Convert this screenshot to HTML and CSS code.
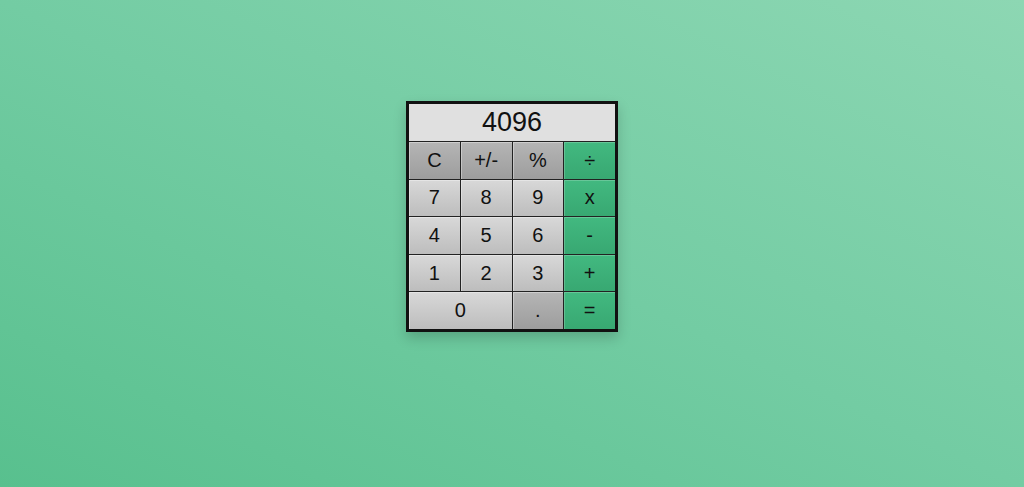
FILE: index.html
```html
<!DOCTYPE html>
<html>
<head>
<meta charset="utf-8">
<link rel="stylesheet" href="styles.css">
</head>
<body>
<div class="page">
  <div class="calc">
    <div class="display">4096</div>
    <div class="keys">
      <div class="key fn">C</div>
      <div class="key fn">+/-</div>
      <div class="key fn">%</div>
      <div class="key op">÷</div>
      <div class="key">7</div>
      <div class="key">8</div>
      <div class="key">9</div>
      <div class="key op">x</div>
      <div class="key">4</div>
      <div class="key">5</div>
      <div class="key">6</div>
      <div class="key op">-</div>
      <div class="key">1</div>
      <div class="key">2</div>
      <div class="key">3</div>
      <div class="key op">+</div>
      <div class="key zero">0</div>
      <div class="key fn">.</div>
      <div class="key op">=</div>
    </div>
  </div>
</div>
</body>
</html>
```

FILE: styles.css
```css
html, body {
  margin: 0;
  height: 100%;
}
body {
  background: linear-gradient(to top right, #58c08e 0%, #73cca3 50%, #8dd7b3 100%);
  font-family: "Liberation Sans", Arial, sans-serif;
}
.page {
  display: flex;
  justify-content: center;
  padding-top: 101px;
}
.calc {
  width: 206px;
  border: 3px solid #111;
  background: #222;
  display: flex;
  flex-direction: column;
  gap: 1px;
  box-shadow: 0 6px 12px rgba(0, 0, 0, 0.18);
}
.display {
  height: 37px;
  background: #e0e0e0;
  color: #111;
  font-size: 27px;
  display: flex;
  align-items: center;
  justify-content: center;
}
.keys {
  display: grid;
  grid-template-columns: repeat(4, 1fr);
  grid-auto-rows: 36.6px;
  gap: 1px;
}
.key {
  display: flex;
  align-items: center;
  justify-content: center;
  font-size: 20px;
  color: #111;
  background: linear-gradient(#d8d8d8, #bdbdbd);
  box-shadow: inset 1px 1px 0 rgba(255, 255, 255, 0.35);
}
.key.fn {
  background: linear-gradient(#b5b5b5, #9d9d9d);
}
.key.op {
  background: linear-gradient(#42b980, #38a872);
  box-shadow: inset 1px 1px 0 rgba(255, 255, 255, 0.2);
}
.key.zero {
  grid-column: span 2;
}
```
